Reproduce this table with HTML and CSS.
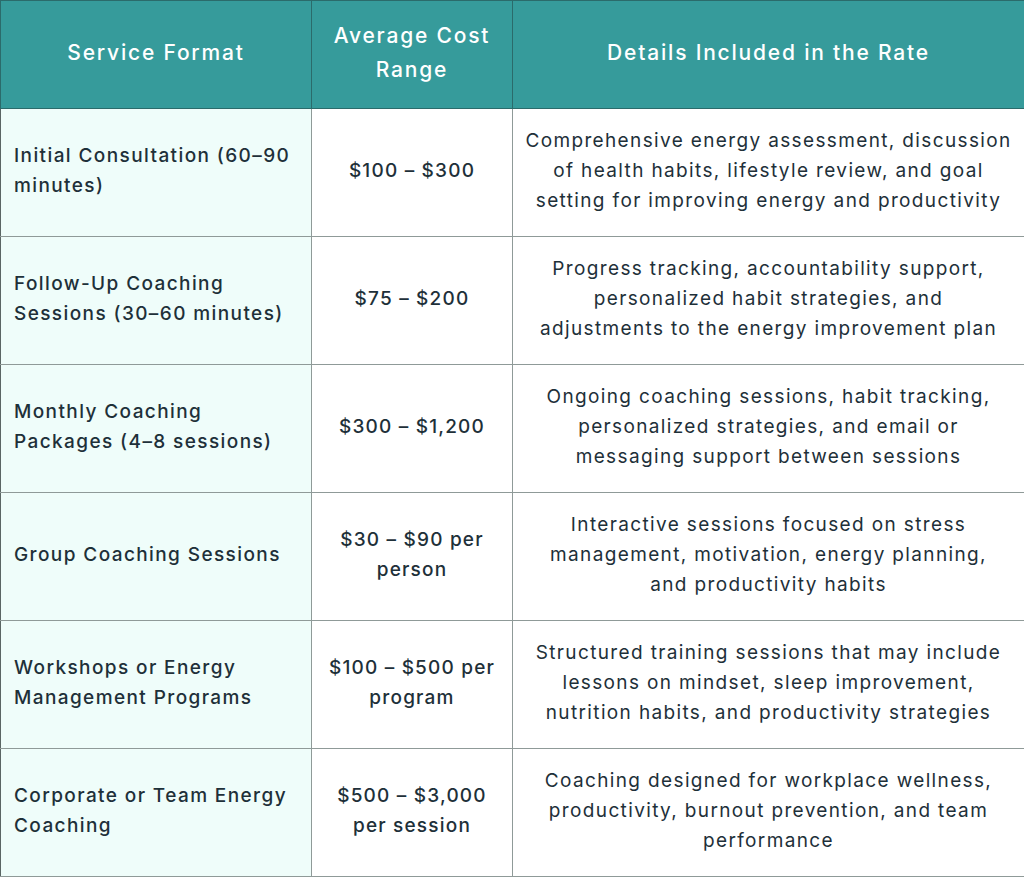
FILE: index.html
```html
<!DOCTYPE html>
<html lang="en">
<head>
<meta charset="utf-8">
<link rel="stylesheet" href="styles.css">
</head>
<body>
<table class="rates">
  <colgroup>
    <col class="c1"><col class="c2"><col class="c3">
  </colgroup>
  <thead>
    <tr>
      <th>Service Format</th>
      <th>Average Cost<br>Range</th>
      <th>Details Included in the Rate</th>
    </tr>
  </thead>
  <tbody>
    <tr>
      <td class="fmt">Initial Consultation (60–90<br>minutes)</td>
      <td class="cost">$100 – $300</td>
      <td class="det">Comprehensive energy assessment, discussion<br>of health habits, lifestyle review, and goal<br>setting for improving energy and productivity</td>
    </tr>
    <tr>
      <td class="fmt">Follow-Up Coaching<br>Sessions (30–60 minutes)</td>
      <td class="cost">$75 – $200</td>
      <td class="det">Progress tracking, accountability support,<br>personalized habit strategies, and<br>adjustments to the energy improvement plan</td>
    </tr>
    <tr>
      <td class="fmt">Monthly Coaching<br>Packages (4–8 sessions)</td>
      <td class="cost">$300 – $1,200</td>
      <td class="det">Ongoing coaching sessions, habit tracking,<br>personalized strategies, and email or<br>messaging support between sessions</td>
    </tr>
    <tr>
      <td class="fmt">Group Coaching Sessions</td>
      <td class="cost">$30 – $90 per<br>person</td>
      <td class="det">Interactive sessions focused on stress<br>management, motivation, energy planning,<br>and productivity habits</td>
    </tr>
    <tr>
      <td class="fmt">Workshops or Energy<br>Management Programs</td>
      <td class="cost">$100 – $500 per<br>program</td>
      <td class="det">Structured training sessions that may include<br>lessons on mindset, sleep improvement,<br>nutrition habits, and productivity strategies</td>
    </tr>
    <tr>
      <td class="fmt">Corporate or Team Energy<br>Coaching</td>
      <td class="cost">$500 – $3,000<br>per session</td>
      <td class="det">Coaching designed for workplace wellness,<br>productivity, burnout prevention, and team<br>performance</td>
    </tr>
  </tbody>
</table>
</body>
</html>
```

FILE: styles.css
```css
html, body {
  margin: 0;
  padding: 0;
  background: #ffffff;
}

.rates {
  width: 1024px;
  border-collapse: collapse;
  table-layout: fixed;
  font-family: "Inter", "Noto Sans", sans-serif;
  font-size: 19px;
  line-height: 30px;
  letter-spacing: 1.5px;
  color: #1e3039;
}

.c1 { width: 311px; }
.c2 { width: 201px; }
.c3 { width: 512px; }

.rates th {
  height: 103px;
  padding: 0 4px 4px;
  background: #369b9b;
  color: #ffffff;
  font-weight: 500;
  font-size: 21px;
  line-height: 34px;
  letter-spacing: 1.8px;
  text-align: center;
  vertical-align: middle;
  border: 1px solid #2b6b6b;
}

.rates td {
  height: 123px;
  padding: 0 4px 4px;
  vertical-align: middle;
  border: 1px solid #8f9a98;
  white-space: nowrap;
}

.rates td.fmt {
  background: #effdfa;
  font-weight: 500;
  letter-spacing: 1.4px;
  text-align: left;
  padding-left: 13px;
  border-left-color: #5a6664;
}

.rates td.cost {
  font-weight: 500;
  letter-spacing: 1.2px;
  text-align: center;
}

.rates td.det {
  font-weight: 400;
  letter-spacing: 1.36px;
  text-align: center;
}
```
